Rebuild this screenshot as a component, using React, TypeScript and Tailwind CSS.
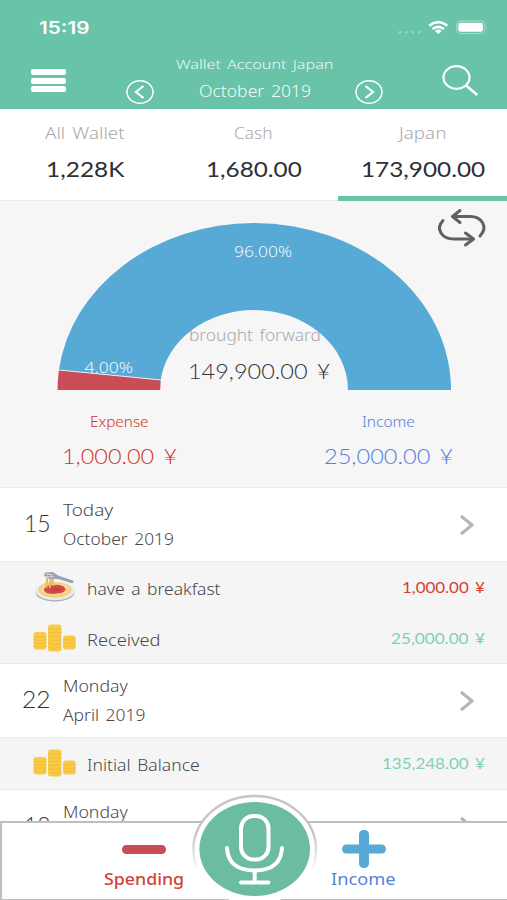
import { useLayoutEffect, useRef, useState } from 'react';
import clsx from 'clsx';

interface FitTextProps {
  children: string;
  className?: string;
}

// Stretches one line of text to the width of its box
function FitText({ children, className }: FitTextProps) {
  const box = useRef<HTMLSpanElement>(null);
  const text = useRef<HTMLSpanElement>(null);
  const [scale, setScale] = useState(1);

  useLayoutEffect(() => {
    if (box.current && text.current) {
      setScale(box.current.clientWidth / text.current.offsetWidth);
    }
  }, [children]);

  return (
    <span ref={box} className={clsx('block shrink-0 whitespace-nowrap', className)}>
      <span ref={text} className="inline-block origin-left [word-spacing:0.12em]" style={{ transform: `scaleX(${scale})` }}>
        {children}
      </span>
    </span>
  );
}

const TABS = [
  { name: 'All Wallet', amount: '1,228K', nameWidth: 'w-[80px]', amountWidth: 'w-[78px]', active: false },
  { name: 'Cash', amount: '1,680.00', nameWidth: 'w-[39px]', amountWidth: 'w-[96px]', active: false },
  { name: 'Japan', amount: '173,900.00', nameWidth: 'w-[47px]', amountWidth: 'w-[124px]', active: true },
];

const DAYS = [
  {
    day: '15',
    dayClass: 'ml-[24px] w-[27px]',
    weekday: 'Today',
    weekdayWidth: 'w-[50px]',
    month: 'October 2019',
    monthWidth: 'w-[111px]',
    entries: [
      {
        icon: 'food',
        label: 'have a breakfast',
        labelWidth: 'w-[134px]',
        amount: '1,000.00 ¥',
        amountClass: 'w-[83px] text-[#cf4436]',
      },
      {
        icon: 'coins',
        label: 'Received',
        labelWidth: 'w-[74px]',
        amount: '25,000.00 ¥',
        amountClass: 'w-[94px] text-[#7fd0b4]',
      },
    ],
  },
  {
    day: '22',
    dayClass: 'ml-[22px] w-[29px]',
    weekday: 'Monday',
    weekdayWidth: 'w-[65px]',
    month: 'April 2019',
    monthWidth: 'w-[82px]',
    entries: [
      {
        icon: 'coins',
        label: 'Initial Balance',
        labelWidth: 'w-[113px]',
        amount: '135,248.00 ¥',
        amountClass: 'w-[103px] text-[#7fd0b4]',
      },
    ],
  },
  {
    day: '18',
    dayClass: 'ml-[24px] w-[27px]',
    weekday: 'Monday',
    weekdayWidth: 'w-[65px]',
    month: '',
    monthWidth: 'w-[95px]',
    entries: [],
  },
];

function StatusIcons() {
  return (
    <svg className="h-[18px] w-[90px]" viewBox="398 18 90 18" fill="none">
      <g fill="#9bd8c6">
        <circle cx="400" cy="32.300" r="1.300" />
        <circle cx="406.400" cy="32.300" r="1.300" />
        <circle cx="412.800" cy="32.300" r="1.300" />
        <circle cx="419.200" cy="32.300" r="1.300" />
      </g>
      <g stroke="#fff" strokeWidth="2.600">
        <path d="M429.300 25.600 Q438.300 18.800 447.300 25.600" />
        <path d="M432.600 29 Q438.300 24.600 444 29" />
      </g>
      <path d="M434.900 30.900 Q438.300 28.300 441.700 30.900 L438.300 34 Z" fill="#fff" />
      <rect x="456.600" y="21" width="28.200" height="12.600" rx="4" stroke="#a9ddce" strokeWidth="1" />
      <rect x="458.300" y="22.800" width="24.600" height="9" rx="2.400" fill="#fff" />
      <path d="M486.200 25.400 Q487.800 27.300 486.200 29.200 Z" fill="#a9ddce" />
    </svg>
  );
}

function CircleArrow({ direction }: { direction: 'left' | 'right' }) {
  return (
    <svg
      className={clsx('h-[26px] w-[28px]', direction === 'right' && '-scale-x-100')}
      viewBox="0 0 28 26"
      fill="none"
      stroke="#fff"
    >
      <ellipse cx="14" cy="13" rx="13" ry="11.300" strokeWidth="1.500" />
      <path d="M17.500 7 L10 13 L17.500 19" strokeWidth="2.200" />
    </svg>
  );
}

function RepeatIcon() {
  return (
    <svg
      className="absolute top-[6px] right-[18px] h-[42px] w-[54px]"
      viewBox="435 207 54 42"
      fill="none"
      stroke="#606060"
      strokeWidth="3"
      strokeLinecap="round"
      strokeLinejoin="round"
    >
      <path d="M460 210.500 L452.500 216.500 L460 222.500" />
      <path d="M453 216.500 H470 C482 216.500 488.500 227 480 236" />
      <path d="M443 220.500 C435 229 442 239 454 239 H473" />
      <path d="M465.500 233 L473.500 239 L465.500 245" />
    </svg>
  );
}

function FoodIcon() {
  return (
    <svg className="h-[32px] w-[42px]" viewBox="0 0 42 32" fill="none">
      <ellipse cx="22" cy="21.500" rx="19.500" ry="9" fill="#a9adb6" />
      <ellipse cx="22" cy="20" rx="19.500" ry="9.200" fill="#eceae8" />
      <ellipse cx="22" cy="18.800" rx="16.500" ry="7.800" fill="#f3cd78" />
      <ellipse cx="22" cy="18.500" rx="14.500" ry="6.200" fill="#f8dc93" />
      <path d="M11 19 C11 15 16 13.500 21 14 C27 13 33 15.500 32.500 19 C30 23 25 22 21 23 C16 23 12 22.500 11 19 Z" fill="#d64a45" />
      <path d="M15 17 C19 15 21 20 27 17 M17 21 C22 18 24 20 29 19" stroke="#b5363a" strokeWidth="0.800" />
      <path d="M14.500 4 C15.500 9 12 13 13.500 17 M17 5 C19 9 16 13 17 17 M19 5 C21 10 19 12 20 15" stroke="#eab65d" strokeWidth="2" />
      <path d="M12 1.500 L20 1 L25 4.500 L40 9.500 Q42 11.500 39 12.300 L25 8 L17 8 L11 5 Z" fill="#98a2b2" />
      <path d="M13 3 L20 4 M13 5.500 L21 6" stroke="#dfe3ea" strokeWidth="0.900" />
    </svg>
  );
}

function CoinsIcon() {
  return (
    <svg className="h-[28px] w-[43px]" viewBox="0 0 43 28" fill="none">
      <g fill="#f9cb45">
        <rect x="0.500" y="8" width="13" height="17.500" rx="3" />
        <rect x="15" y="0.500" width="13.500" height="27" rx="3" />
        <rect x="30" y="11.500" width="12.700" height="14" rx="3" />
      </g>
      <g stroke="#efb93c" strokeWidth="0.900">
        <path d="M1 12 Q7 14 13 12 M1 15.500 Q7 17.500 13 15.500 M1 19 Q7 21 13 19 M1 22.300 Q7 24.300 13 22.300" />
        <path d="M15.500 4.500 Q22 6.500 28 4.500 M15.500 8.200 Q22 10.200 28 8.200 M15.500 12 Q22 14 28 12 M15.500 15.700 Q22 17.700 28 15.700 M15.500 19.500 Q22 21.500 28 19.500 M15.500 23.200 Q22 25.200 28 23.200" />
        <path d="M30.500 15.300 Q36.500 17.300 42.300 15.300 M30.500 18.700 Q36.500 20.700 42.300 18.700 M30.500 22 Q36.500 24 42.300 22" />
      </g>
    </svg>
  );
}

function Header() {
  return (
    <header className="h-[109px] shrink-0 bg-[#68c3a9] text-white">
      <div className="flex h-[54px] items-start justify-between pr-[19px] pl-[39px]">
        <FitText className="mt-[17px] w-[50px] font-['Inter'] text-[17px] leading-[22px] font-semibold">15:19</FitText>
        <div className="mt-[18px]">
          <StatusIcons />
        </div>
      </div>
      <div className="flex h-[55px] items-start">
        <div className="mt-[15px] ml-[31px] flex w-[35px] flex-col gap-[2.5px]">
          <div className="h-[6px] rounded-[2px] bg-white" />
          <div className="h-[6px] rounded-[2px] bg-white" />
          <div className="h-[6px] rounded-[2px] bg-white" />
        </div>
        <div className="mt-[25px] ml-[60px]">
          <CircleArrow direction="left" />
        </div>
        <div className="flex w-[201px] flex-col items-center">
          <FitText className="w-[157px] text-[13.500px] leading-[20px] text-[#edf8f5]">Wallet Account Japan</FitText>
          <FitText className="mt-[6px] w-[112px] text-[15.500px] leading-[22px] text-[#f3fbf8]">October 2019</FitText>
        </div>
        <div className="mt-[25px]">
          <CircleArrow direction="right" />
        </div>
        <svg className="mt-[9px] ml-[57px] h-[34px] w-[40px]" viewBox="440 63 40 34" fill="none" stroke="#fff" strokeWidth="2.200">
          <ellipse cx="456.500" cy="77.500" rx="13" ry="11.300" />
          <path d="M466 85.500 L477.300 95" strokeWidth="2.600" />
        </svg>
      </div>
    </header>
  );
}

function Tabs() {
  return (
    <nav className="grid h-[92px] shrink-0 grid-cols-3 bg-white">
      {TABS.map((tab) => (
        <div
          key={tab.name}
          className={clsx('flex flex-col items-center pt-[13px]', tab.active ? 'border-b-[5px] border-[#68c3a9]' : 'border-b border-[#e8e8e8]')}
        >
          <FitText className={clsx('text-[16px] leading-[22px] text-[#a9a9ad]', tab.nameWidth)}>{tab.name}</FitText>
          <FitText className={clsx("mt-[11px] font-['Lato'] text-[21px] leading-[28px] font-normal text-[#2f2f34]", tab.amountWidth)}>
            {tab.amount}
          </FitText>
        </div>
      ))}
    </nav>
  );
}

function Summary() {
  return (
    <section className="relative h-[286px] shrink-0 bg-[#f6f6f6]">
      <div className="flex flex-col items-center pt-[123px] pl-[2px]">
        <FitText className="w-[132px] text-[16px] leading-[22px] text-[#a9a9ad]">brought forward</FitText>
        <FitText className="mt-[11px] ml-[8px] w-[142px] font-['Lato'] text-[21px] leading-[28px] text-[#333337]">149,900.00 ¥</FitText>
      </div>
      <svg className="absolute top-0 left-0 h-[200px] w-full" viewBox="0 201 507 200">
        <path d="M58.900 370 A197 167 0 0 1 254 223 A197 167 0 0 1 451 390 H348 A94 80 0 0 0 254 310 A94 80 0 0 0 160.700 380 Z" fill="#57a9d6" />
        <path d="M57.500 390 Q57.700 379 58.900 370 L160.700 380 L160.200 390 Z" fill="#c94c56" />
        <path d="M59 370 L161 380" stroke="#e9eef2" strokeWidth="1" />
        <g fill="#f1f8fc" fontSize="15">
          <text x="234" y="256.500" textLength="58" lengthAdjust="spacingAndGlyphs">96.00%</text>
          <text x="84.500" y="373" textLength="48.500" lengthAdjust="spacingAndGlyphs">4.00%</text>
        </g>
      </svg>
      <RepeatIcon />
      <div className="mt-[27px] flex justify-between pr-[54px] pl-[62px]">
        <div className="flex flex-col items-center text-[#cf3426]">
          <FitText className="w-[59px] text-[14px] leading-[20px]">Expense</FitText>
          <FitText className="mt-[10px] w-[115px] font-['Lato'] text-[21px] leading-[28px]">1,000.00 ¥</FitText>
        </div>
        <div className="flex flex-col items-center text-[#5580dc]">
          <FitText className="w-[53px] text-[14px] leading-[20px]">Income</FitText>
          <FitText className="mt-[10px] w-[129px] font-['Lato'] text-[21px] leading-[28px]">25,000.00 ¥</FitText>
        </div>
      </div>
    </section>
  );
}

function DayList() {
  return (
    <main className="min-h-0 flex-1 overflow-hidden">
      {DAYS.map((group) => (
        <section key={group.day}>
          <div className="flex h-[74px] items-start border-t border-[#e9e9e9] bg-white">
            <FitText className={clsx("mt-[21px] font-['Lato'] text-[23px] leading-[28px] text-[#333337]", group.dayClass)}>
              {group.day}
            </FitText>
            <div className="ml-[12px] flex-1 pt-[11px] text-[15.500px] leading-[22px] text-[#48484d]">
              <FitText className={group.weekdayWidth}>{group.weekday}</FitText>
              {group.month && <FitText className={clsx('mt-[7px]', group.monthWidth)}>{group.month}</FitText>}
            </div>
            <svg className="mt-[26px] mr-[32px] h-[22px] w-[16px]" viewBox="0 0 16 22" fill="none" stroke="#b5b5b8" strokeWidth="3">
              <path d="M2 2 L13 11 L2 20" />
            </svg>
          </div>
          <div className={clsx('bg-[#f5f5f5]', group.entries.length > 0 && 'border-t border-[#ececec]')}>
            {group.entries.map((entry) => (
              <div key={entry.label} className="flex h-[50.500px] items-center pr-[22px]">
                <div className="ml-[33px] flex w-[54px]">{entry.icon === 'food' ? <FoodIcon /> : <CoinsIcon />}</div>
                <FitText className={clsx('mt-[4px] text-[16px] leading-[22px] text-[#48484d]', entry.labelWidth)}>
                  {entry.label}
                </FitText>
                <FitText className={clsx("ml-auto font-['Lato'] text-[15.500px] leading-[22px] font-normal", entry.amountClass)}>
                  {entry.amount}
                </FitText>
              </div>
            ))}
          </div>
        </section>
      ))}
    </main>
  );
}

function BottomBar() {
  return (
    <footer className="relative flex h-[79px] shrink-0 border-t-2 border-b border-l-2 border-[#bfbfc1] bg-white">
      <div className="ml-[101px] flex w-[82px] flex-col items-center pt-[22px]">
        <div className="h-[9px] w-[44px] rounded-full bg-[#c94c56]" />
        <FitText className="mt-[14px] w-[80px] text-[16px] leading-[22px] font-medium text-[#cf4436]">Spending</FitText>
      </div>
      <div className="ml-[145px] flex w-[66px] flex-col items-center pt-[7px]">
        <svg className="ml-[2px] h-[38px] w-[44px]" viewBox="0 0 44 38" fill="#57a9d6">
          <rect x="0" y="14.500" width="44" height="9" rx="4.500" />
          <rect x="17" y="0" width="10" height="38" rx="4.500" />
        </svg>
        <FitText className="w-[65px] text-[16px] leading-[22px] font-normal text-[#5b82d8]">Income</FitText>
      </div>
      <svg className="absolute -top-[29px] left-[189px] h-[108px] w-[128px]" viewBox="191 793 128 108" fill="none">
        <defs>
          <linearGradient id="ring" x1="0" y1="0" x2="0" y2="1">
            <stop offset="0.350" stopColor="#c6c6c8" />
            <stop offset="0.700" stopColor="#fff" />
          </linearGradient>
        </defs>
        <ellipse cx="254.700" cy="848.500" rx="61.300" ry="53.500" fill="#fff" stroke="url(#ring)" strokeWidth="2.500" />
        <ellipse cx="254.700" cy="848" rx="55.300" ry="47" fill="#6cbc9f" />
        <g stroke="#fff" strokeWidth="4" strokeLinecap="round">
          <rect x="241" y="815" width="27.500" height="43.500" rx="12.500" />
          <path d="M227 847 C228 863 239 869.500 254.700 869.500 C270.500 869.500 281 863 282 847" />
          <path d="M254.700 870 V881 M241 881.500 H268.500" />
        </g>
      </svg>
    </footer>
  );
}

export default function App() {
  return (
    <div className="flex h-[900px] w-[507px] flex-col overflow-hidden bg-white font-['Noto_Sans',sans-serif] font-light">
      <Header />
      <Tabs />
      <Summary />
      <DayList />
      <BottomBar />
    </div>
  );
}
